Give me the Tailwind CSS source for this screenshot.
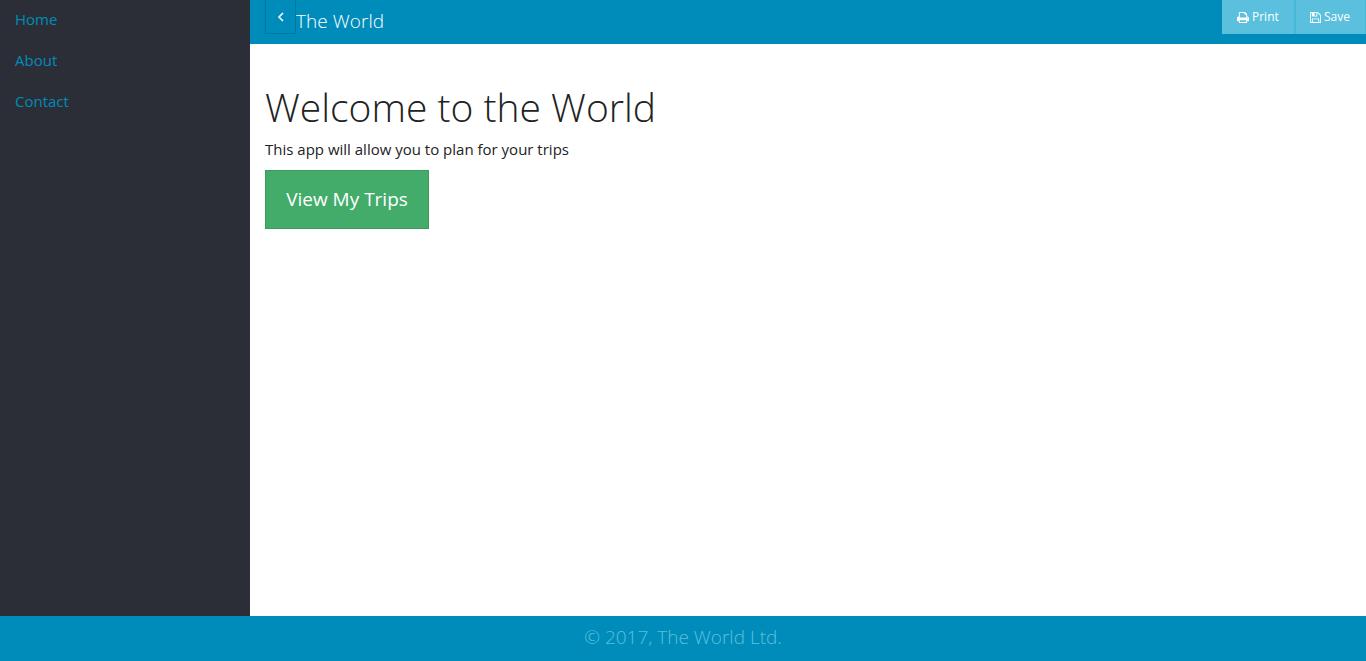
<!DOCTYPE html>
<html lang="en"><head><meta charset="utf-8"><title>The World</title>
<script src="https://cdn.jsdelivr.net/npm/@tailwindcss/browser@4"></script></head>
<body class="h-[661px] overflow-hidden bg-white font-['Open_Sans',sans-serif] text-[15px] leading-[21px] text-[#222222] flex flex-col">
<div class="flex flex-1">
<nav class="w-[250px] shrink-0 bg-[#2b2e37] text-[#008cba] pt-[9px] pl-[15px] flex flex-col gap-5">
<a>Home</a><a>About</a><a>Contact</a>
</nav>
<div class="flex-1">
<header class="h-11 bg-[#008cba] text-white flex items-start pl-[15px]">
<button class="w-[31px] h-[34px] border border-[#0079a1] border-t-0 flex items-center justify-center"><svg class="w-2 h-3" viewBox="0 0 8 12" fill="none" stroke="white" stroke-width="1.6"><path d="M6 2L2 6l4 4"/></svg></button>
<span class="text-[19px] leading-[27px] mt-2 font-light tracking-[0.05px]">The World</span>
<div class="ml-auto flex h-[34px] text-xs bg-[#5bc0de]">
<button class="w-[73px] pl-[15px] border-r border-[#46b8da] flex items-center gap-[3px]"><svg class="w-3 h-[13px]" viewBox="0 0 1664 1792" fill="white"><path d="M384 1536h896v-256H384v256zm0-640h896V512h-160q-40 0-68-28t-28-68V256H384v640zm1152 64q0-26-19-45t-45-19-45 19-19 45 19 45 45 19 45-19 19-45zm128 0v416q0 13-9.500 22.500t-22.500 9.500h-224v160q0 40-28 68t-68 28H352q-40 0-68-28t-28-68v-160H32q-13 0-22.500-9.500T0 1376V960q0-79 56.500-135.500T192 768h64V224q0-40 28-68t68-28h672q40 0 88 20t76 48l152 152q28 28 48 76t20 88v256h64q79 0 135.500 56.500T1664 960z"/></svg>Print</button>
<button class="w-[71px] pl-[14px] border-x border-[#46b8da] flex items-center gap-[3px]"><svg class="w-[11px] h-[13px]" viewBox="0 0 1536 1792" fill="white"><path d="M384 1536h768v-384H384v384zm896 0h128V640q0-14-10-38.500t-20-34.500l-281-281q-10-10-34-20t-39-10v416q0 40-28 68t-68 28H352q-40 0-68-28t-28-68V256H128v1280h128v-416q0-40 28-68t68-28h832q40 0 68 28t28 68v416zM896 608V288q0-13-9.500-22.500T864 256H672q-13 0-22.500 9.500T640 288v320q0 13 9.500 22.500T672 640h192q13 0 22.500-9.500T896 608zm640 32v928q0 40-28 68t-68 28H96q-40 0-68-28t-28-68V224q0-40 28-68t68-28h928q40 0 88 20t76 48l280 280q28 28 48 76t20 88z"/></svg>Save</button>
</div></header>
<main class="pl-[15px] pt-[41px]">
<h1 class="text-[39px] leading-[43px] font-light">Welcome to the World</h1>
<p class="mt-[11px]">This app will allow you to plan for your trips</p>
<button class="mt-[10px] w-[164px] h-[59px] bg-[#43ac6a] border border-[#3c9a5f] text-white text-[19px]">View My Trips</button>
</main></div></div>
<footer class="h-[45px] bg-[#008cba] text-[#5bc0de] text-center text-[19px] leading-[43px] font-light">© 2017, The World Ltd.</footer>
</body></html>
